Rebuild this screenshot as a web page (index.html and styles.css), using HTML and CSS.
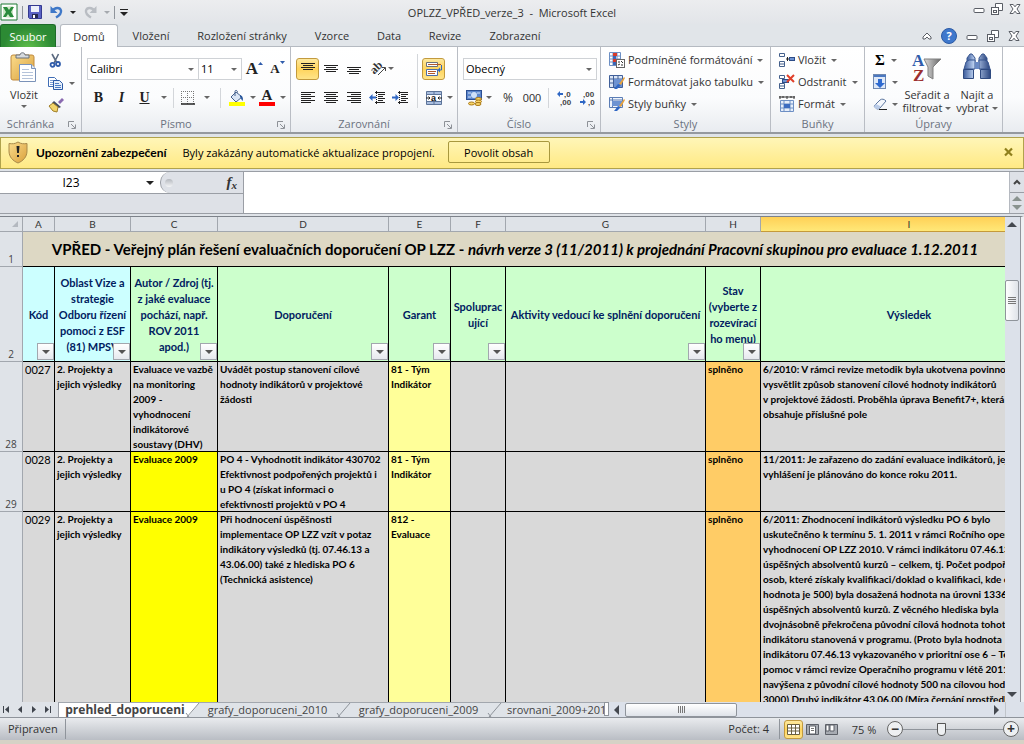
FILE: index.html
```html
<!DOCTYPE html>
<html lang="cs">
<head>
<meta charset="utf-8">
<title>OPLZZ_VPŘED_verze_3 - Microsoft Excel</title>
<link rel="stylesheet" href="styles.css">
</head>
<body>
<svg class="defs" aria-hidden="true">
  <defs>
    <linearGradient id="blue" x1="0" y1="0" x2="1" y2="1"><stop offset="0" stop-color="#a9c6ee"/><stop offset="1" stop-color="#2c55a0"/></linearGradient>
    <linearGradient id="gold" x1="0" y1="0" x2="1" y2="1"><stop offset="0" stop-color="#fbdc8c"/><stop offset="1" stop-color="#d9a03c"/></linearGradient>
    <linearGradient id="grey" x1="0" y1="0" x2="1" y2="0"><stop offset="0" stop-color="#ddd"/><stop offset="1" stop-color="#666"/></linearGradient>
    <linearGradient id="tube" x1="0" y1="0" x2="1" y2="0"><stop offset="0" stop-color="#3c5c9c"/><stop offset=".4" stop-color="#c2d6f4"/><stop offset="1" stop-color="#2b4680"/></linearGradient>
    <symbol id="min" viewBox="0 0 12 12"><rect x="1" y="5.5" width="10" height="4" rx="1" fill="#fff" stroke="#5a5e66"/></symbol>
    <symbol id="restore" viewBox="0 0 12 12"><path d="M4.500 4V.5h7v7H8" fill="#fff" stroke="#5a5e66"/><rect x=".5" y="4.500" width="7" height="7" fill="#fff" stroke="#5a5e66"/><rect x="2.500" y="7.500" width="3" height="2" fill="none" stroke="#5a5e66"/></symbol>
    <symbol id="close" viewBox="0 0 12 12"><path d="M1 1.500h3.200L6 3.800l1.800-2.300H11L8 6l3 4.500H7.800L6 8.200l-1.800 2.300H1L4 6z" fill="#fff" stroke="#5a5e66"/></symbol>
    <symbol id="launch" viewBox="0 0 8 8"><path d="M.5 6V.5H6" fill="none" stroke="#8d9197"/><path d="M3 3l4 4M7.500 3.500v4h-4" fill="none" stroke="#8d9197"/></symbol>
  </defs>
</svg>
<div class="app">
  <header class="titlebar">
    <div class="quick">
      <svg width="18" height="18" viewBox="0 0 18 18"><path d="M1 1h16v16H1z" fill="#fff" stroke="#1e7a35"/><path d="M3 4l10-1v12L3 14z" fill="#cfe8c8"/><path d="M3 4h4l2 3 2-3h3l-3 5 3 5h-4l-2-3-2 3H3l3-5z" fill="#2a8b3c"/></svg>
      <i class="vsep"></i>
      <button aria-label="Uložit"><svg width="14" height="14" viewBox="0 0 14 14"><path d="M.5.5h13v13h-12l-1-1z" fill="#5a62c4" stroke="#353a90"/><path d="M3 1h8v6H3z" fill="#eef1fa"/><path d="M4 9h6v4H4z" fill="#252a50"/><path d="M5 10h2v3H5z" fill="#fff"/></svg></button>
      <button class="undo" aria-label="Zpět"><svg width="13" height="14" viewBox="0 0 13 14"><path d="M2 6C5 2 10 2 11 5.500c.6 3-1.500 5-5 7" fill="none" stroke="#3f78c8" stroke-width="2.400"/><path d="M.5 1v7h7z" fill="#3f78c8"/></svg><i class="tri dark"></i></button>
      <button class="undo" aria-label="Znovu"><svg width="13" height="14" viewBox="0 0 13 14"><path d="M11 6C8 2 3 2 2 5.500c-.6 3 1.500 5 5 7" fill="none" stroke="#b9bdc3" stroke-width="2.400"/><path d="M12.500 1v7h-7z" fill="#b9bdc3"/></svg><i class="tri pale"></i></button>
      <i class="vsep"></i>
      <button aria-label="Přizpůsobit"><svg width="8" height="7" viewBox="0 0 8 7"><path d="M0 .5h8" stroke="#222"/><path d="M0 3h8L4 7z" fill="#222"/></svg></button>
    </div>
    <h1>OPLZZ_VPŘED_verze_3&nbsp; -&nbsp; Microsoft Excel</h1>
    <div class="winbtns">
      <button aria-label="Minimalizovat"><svg width="12" height="12"><use href="#min"/></svg></button>
      <button aria-label="Obnovit"><svg width="12" height="12"><use href="#restore"/></svg></button>
      <button aria-label="Zavřít"><svg width="12" height="12"><use href="#close"/></svg></button>
    </div>
  </header>

  <nav class="tabs">
    <button class="file">Soubor</button>
    <button class="tab active">Domů</button>
    <button class="tab t2">Vložení</button>
    <button class="tab t3">Rozložení stránky</button>
    <button class="tab t4">Vzorce</button>
    <button class="tab t5">Data</button>
    <button class="tab t6">Revize</button>
    <button class="tab t7">Zobrazení</button>
    <div class="tabright">
      <button aria-label="Sbalit pás karet"><svg width="10" height="8" viewBox="0 0 10 8"><path d="M5 1l4 4v2H7L5 5 3 7H1V5z" fill="#fff" stroke="#5a5e66"/></svg></button>
      <button class="help" aria-label="Nápověda">?</button>
      <button aria-label="Minimalizovat sešit"><svg width="12" height="12"><use href="#min"/></svg></button>
      <button aria-label="Obnovit sešit"><svg width="12" height="12"><use href="#restore"/></svg></button>
      <button aria-label="Zavřít sešit"><svg width="12" height="12"><use href="#close"/></svg></button>
    </div>
  </nav>

  <section class="ribbon">
    <div class="group g-clip">
      <div class="body">
        <button class="big paste"><svg width="28" height="32" viewBox="0 0 28 32"><rect x="1" y="3" width="23" height="25" rx="2" fill="url(#gold)" stroke="#c08a3e"/><path d="M6 6V3h4c0-3 5-3 5 0h4v3z" fill="#d6dade" stroke="#6b7078"/><path d="M9.500 12.500h12l4 4v13h-16z" fill="#fff" stroke="#7a92b8"/><path d="M21.500 12.500v4h4" fill="#dfe8f5" stroke="#7a92b8"/><path d="M12 17.500h7M12 20.500h11M12 23.500h11M12 26.500h11" stroke="#b4c3da"/></svg><span>Vložit</span><i class="tri"></i></button>
        <div class="stack clipstack">
          <button aria-label="Vyjmout"><svg width="16" height="16" viewBox="0 0 16 16"><path d="M4 1l5 9M10.500 1L6 10" stroke="#5b6a80" stroke-width="1.600"/><circle cx="4.500" cy="11.800" r="2" fill="none" stroke="#2f5cab" stroke-width="1.800"/><circle cx="10" cy="11" r="2" fill="none" stroke="#2f5cab" stroke-width="1.800"/></svg></button>
          <button aria-label="Kopírovat"><svg width="16" height="16" viewBox="0 0 16 16"><path d="M.5 2.500h6l2 2v7h-8z" fill="#fff" stroke="#3f6db5"/><path d="M2 5.500h4M2 7.500h4M2 9.500h4" stroke="#7b9dd4"/><path d="M5.500 5.500h6l3 3v6h-9z" fill="#e4eefb" stroke="#2c5aa6"/><path d="M7 8.500h4M7 10.500h6M7 12.500h6" stroke="#4d7cc4"/></svg><i class="tri"></i></button>
          <button aria-label="Kopírovat formát"><svg width="16" height="16" viewBox="0 0 16 16"><path d="M10 5l4-4 2 2-4 4z" fill="#8a6ab0"/><path d="M6 4l7 6-2 1-7-5z" fill="#444c60"/><path d="M5 6l5 4-1 5-4-1-4-5z" fill="#f3d56c" stroke="#a07f28"/></svg></button>
        </div>
      </div>
      <footer><span>Schránka</span><svg class="launch" width="8" height="8"><use href="#launch"/></svg></footer>
    </div>

    <div class="group g-font">
      <div class="body rows">
        <div class="row">
          <span class="combo fontname"><select aria-label="Písmo"><option>Calibri</option></select><i class="tri"></i></span><span class="combo fontsize"><select aria-label="Velikost písma"><option>11</option></select><i class="tri"></i></span>
          <button class="grow serif" aria-label="Zvětšit písmo">A<svg width="5" height="3" viewBox="0 0 5 3"><path d="M0 3h5L2.500 0z" fill="#2f5cab"/></svg></button>
          <button class="shrink serif" aria-label="Zmenšit písmo">A<svg width="5" height="3" viewBox="0 0 5 3"><path d="M0 0h5L2.500 3z" fill="#2f5cab"/></svg></button>
        </div>
        <div class="row">
          <button class="b serif">B</button><button class="b serif it">I</button><button class="b serif un">U</button><i class="tri ml"></i>
          <i class="rsep tight"></i>
          <button class="ib" aria-label="Ohraničení"><svg width="14" height="14" viewBox="0 0 14 14"><path d="M.5 0v13M6.500 0v13M12.500 0v13M0 .5h13M0 6.500h13" stroke="#777" stroke-dasharray="1 1"/><path d="M0 13h14" stroke="#222" stroke-width="1.500"/></svg></button><i class="tri ml"></i>
          <i class="rsep"></i>
          <button class="ib" aria-label="Barva výplně"><svg width="18" height="16" viewBox="0 0 18 16"><path d="M3 7l5-5 6 5-6 5z" fill="#dbe6f5" stroke="#44608c"/><path d="M7 6V1.500c0-2 3-1 2.500 1" fill="none" stroke="#44608c"/><path d="M12 5c3 1 3.500 4 2.500 6-1.500-1-1-3-2.500-4z" fill="#27569c"/><path d="M1 12h16v4H1z" fill="#ff0"/></svg></button><i class="tri ml2"></i>
          <button class="ib fc serif" aria-label="Barva písma">A</button><i class="tri"></i>
        </div>
      </div>
      <footer><span>Písmo</span><svg class="launch" width="8" height="8"><use href="#launch"/></svg></footer>
    </div>

    <div class="group g-align">
      <div class="body">
        <div class="rows">
          <div class="row">
            <button class="ab on" aria-label="Nahoru"><svg width="14" height="14" viewBox="0 0 14 14"><path d="M0 1.500h14M2 3.500h10M0 5.500h14M2 7.500h10" stroke="#222"/></svg></button>
            <button class="ab" aria-label="Na střed svisle"><svg width="14" height="14" viewBox="0 0 14 14"><path d="M0 3.500h14M2 5.500h10M0 7.500h14M2 9.500h10" stroke="#222"/></svg></button>
            <button class="ab" aria-label="Dolů"><svg width="14" height="14" viewBox="0 0 14 14"><path d="M0 5.500h14M2 7.500h10M0 9.500h14M2 11.500h10" stroke="#222"/></svg></button>
            <button class="ab orient" aria-label="Orientace"><svg width="16" height="16" viewBox="0 0 16 16"><text x="0" y="10" transform="rotate(-45 6 8)" font-family="Liberation Serif" font-size="12" font-weight="bold" fill="#333">ab</text><path d="M7 14l7-7M14.500 10V6.500H11" fill="none" stroke="#444"/></svg><i class="tri"></i></button>
          </div>
          <div class="row">
            <button class="ab" aria-label="Vlevo"><svg width="14" height="12" viewBox="0 0 14 12"><path d="M0 .5h14M0 2.500h10M0 4.500h14M0 6.500h10M0 8.500h14M0 10.500h10" stroke="#222"/></svg></button>
            <button class="ab" aria-label="Na střed"><svg width="14" height="12" viewBox="0 0 14 12"><path d="M0 .5h14M2 2.500h10M0 4.500h14M2 6.500h10M0 8.500h14M2 10.500h10" stroke="#222"/></svg></button>
            <button class="ab" aria-label="Vpravo"><svg width="14" height="12" viewBox="0 0 14 12"><path d="M0 .5h14M4 2.500h10M0 4.500h14M4 6.500h10M0 8.500h14M4 10.500h10" stroke="#222"/></svg></button>
            <button class="ab ind" aria-label="Zmenšit odsazení"><svg width="16" height="14" viewBox="0 0 16 14"><path d="M6 1.500h10M9 3.500h7M9 5.500h5M9 7.500h7M9 9.500h5M6 11.500h10" stroke="#222"/><path d="M7.500 0v14" stroke="#222" stroke-dasharray="1 1"/><path d="M0 6.500L3.500 3v2.500H7v2H3.500V10z" fill="#2f67c4"/></svg></button>
            <button class="ab" aria-label="Zvětšit odsazení"><svg width="16" height="14" viewBox="0 0 16 14"><path d="M6 1.500h10M9 3.500h7M9 5.500h5M9 7.500h7M9 9.500h5M6 11.500h10" stroke="#222"/><path d="M7.500 0v14" stroke="#222" stroke-dasharray="1 1"/><path d="M7 6.500L3.500 3v2.500H0v2h3.500V10z" fill="#2f67c4"/></svg></button>
          </div>
        </div>
        <i class="bsep"></i>
        <div class="rows">
          <div class="row"><button class="ab on" aria-label="Zalamovat text"><svg width="16" height="16" viewBox="0 0 16 16"><path d="M.5 1.500h11v4H.5z" fill="#fff" stroke="#6b7078"/><path d="M2 3.500h13" stroke="#b35a2a"/><path d="M.5 8.500h11v6H.5z" fill="#fff" stroke="#4c6ea8"/><path d="M2 10.500h8M2 12.500h7" stroke="#b35a2a"/><path d="M15.500 4v5H13" fill="none" stroke="#2f67c4"/><path d="M11.500 9L14 6.500v5z" fill="#2f67c4"/></svg></button></div>
          <div class="row"><button class="ab" aria-label="Sloučit"><svg width="16" height="16" viewBox="0 0 16 16"><path d="M.5 1.500h15v13H.5zM.5 4.500h15M.5 11.500h15M8 1v3M8 12v3" fill="#a9bedf" stroke="#5d7499"/><path d="M1 5h14v6H1z" fill="#fff"/><text x="5" y="10.500" font-family="Liberation Sans" font-size="9" font-weight="bold" fill="#111">a</text><path d="M0 8h4M2.500 6.500L4 8 2.500 9.500M16 8h-4M13.500 6.500L12 8l1.500 1.500" stroke="#222" fill="none"/></svg></button><i class="tri ml2"></i></div>
        </div>
      </div>
      <footer><span>Zarovnání</span><svg class="launch" width="8" height="8"><use href="#launch"/></svg></footer>
    </div>

    <div class="group g-num">
      <div class="body rows">
        <div class="row"><span class="combo numfmt"><select aria-label="Formát čísla"><option>Obecný</option></select><i class="tri"></i></span></div>
        <div class="row">
          <button class="ab" aria-label="Účetnický formát"><svg width="17" height="16" viewBox="0 0 17 16"><rect x=".5" y=".5" width="15" height="9" fill="#5c86cc" stroke="#2b4f92"/><circle cx="8" cy="5" r="3" fill="#cfe0f8"/><path d="M2 3h3M11 3h3M2 7h3" stroke="#d7e4f8"/><ellipse cx="12.500" cy="9" rx="3" ry="1.500" fill="#f7d468" stroke="#a97817"/><ellipse cx="12.500" cy="11.500" rx="3" ry="1.500" fill="#f7d468" stroke="#a97817"/><ellipse cx="12" cy="14" rx="3" ry="1.500" fill="#f7d468" stroke="#a97817"/><ellipse cx="5.500" cy="13.500" rx="3" ry="1.500" fill="#f7d468" stroke="#a97817"/></svg></button><i class="tri"></i>
          <button class="pct">%</button><button class="zeros">000</button>
          <i class="rsep"></i>
          <button class="ab dec" aria-label="Přidat desetinné místo"><svg width="16" height="16" viewBox="0 0 16 16"><path d="M0 4l3-3v2h3v2H3v2z" fill="#2f67c4"/><text x="7" y="7" font-family="Liberation Sans" font-size="8" font-weight="bold" fill="#444">,0</text><text x="3" y="15" font-family="Liberation Sans" font-size="8" font-weight="bold" fill="#444">,00</text></svg></button>
          <button class="ab" aria-label="Odebrat desetinné místo"><svg width="16" height="16" viewBox="0 0 16 16"><text x="3" y="7" font-family="Liberation Sans" font-size="8" font-weight="bold" fill="#444">,00</text><path d="M6 12L3 9v2H0v2h3v2z" fill="#2f67c4"/><text x="8" y="15" font-family="Liberation Sans" font-size="8" font-weight="bold" fill="#444">,0</text></svg></button>
        </div>
      </div>
      <footer><span>Číslo</span><svg class="launch" width="8" height="8"><use href="#launch"/></svg></footer>
    </div>

    <div class="group g-style">
      <div class="body stack">
        <button class="cmd"><svg width="16" height="16" viewBox="0 0 16 16"><path d="M.5.5h11v13H.5zM4 0v14M8 0v14M0 4h12M0 7h12M0 10h12" fill="#fff" stroke="#6d8fc4"/><path d="M4 1h4v3H4zM4 7h5v3H4z" fill="#d93a2a"/><path d="M4 4h3v3H4zM4 10h3v3H4z" fill="#3c66b4"/><rect x="7.500" y="7.500" width="8" height="8" fill="#fff" stroke="#666"/><path d="M9 10h2M12 9l2 2M9 13l2-1M12 13h2" stroke="#333"/></svg><span>Podmíněné formátování</span><i class="tri"></i></button>
        <button class="cmd"><svg width="16" height="16" viewBox="0 0 16 16"><path d="M.5 1.500h13v12H.5zM4.500 1v12M9 1v12M0 5h13M0 9h13" fill="#dbe6f6" stroke="#41609a"/><path d="M5 5h8v8H5z" fill="#6d93d2"/><path d="M15 3l-5 7 2 1 4-7z" fill="#e9a33c"/><path d="M9 10l3 1-4 4H5z" fill="#2f67c4"/></svg><span>Formátovat jako tabulku</span><i class="tri"></i></button>
        <button class="cmd"><svg width="16" height="16" viewBox="0 0 16 16"><path d="M.5 1.500h13v10H.5zM0 4h13M3.500 1v11" fill="#eef3fb" stroke="#5b7db5"/><path d="M3 5h10v5H3z" fill="#6d93d2"/><path d="M15 3l-5 7 2 1 4-7z" fill="#e9a33c"/><path d="M9 10l3 1-4 4H5z" fill="#2f67c4"/></svg><span>Styly buňky</span><i class="tri"></i></button>
      </div>
      <footer><span>Styly</span></footer>
    </div>

    <div class="group g-cells">
      <div class="body stack">
        <button class="cmd"><svg width="16" height="16" viewBox="0 0 16 16"><path d="M.5 1.500h5v3h-5zM.5 9.500h5v5h-5zM0 12h5" fill="#fff" stroke="#44608c"/><rect x="10.500" y="5.500" width="5" height="3" fill="#6d93d2" stroke="#2c4c88"/><path d="M7 7h3M8.500 5v4" stroke="#222"/></svg><span>Vložit</span><i class="tri"></i></button>
        <button class="cmd"><svg width="16" height="16" viewBox="0 0 16 16"><path d="M.5 1.500h5v3h-5zM.5 9.500h5v5h-5zM0 12h5" fill="#fff" stroke="#44608c"/><rect x="3.500" y="5.500" width="6" height="3" fill="#6d93d2" stroke="#2c4c88"/><path d="M8 1l7 7M15 1L8 8" stroke="#e0402a" stroke-width="2"/></svg><span>Odstranit</span><i class="tri"></i></button>
        <button class="cmd"><svg width="16" height="16" viewBox="0 0 16 16"><path d="M0 1h16M1 0v3M4 0v2M8 0v3M12 0v2M15 0v3" stroke="#333"/><path d="M1.500 4.500h13v11h-13zM5 4v11M11 4v11M1 8h13M1 12h13" fill="#e6eefa" stroke="#6d8fc4"/><path d="M5 8h6v4H5z" fill="#3c6cc0"/></svg><span>Formát</span><i class="tri"></i></button>
      </div>
      <footer><span>Buňky</span></footer>
    </div>

    <div class="group g-edit">
      <div class="body">
        <div class="stack editstack">
          <button><span class="sigma">Σ</span><i class="tri"></i></button>
          <button aria-label="Výplň"><svg width="14" height="16" viewBox="0 0 14 16"><rect x=".5" y=".5" width="12" height="14" fill="#dfe9f8" stroke="#7089b0"/><path d="M1 1h12v2H1z" fill="#4c78c0"/><path d="M5 5h4v4h3l-5 5-5-5h3z" fill="#2f6bd0"/></svg><i class="tri"></i></button>
          <button aria-label="Vymazat"><svg width="14" height="13" viewBox="0 0 14 13"><path d="M1 8l6-6c2-1.500 4-1 6 1L7 10c-2 2-4 1-6-2z" fill="#f4f7fc" stroke="#5d779f"/><path d="M1 8c1 3 3 4 6 2V8L3 6z" fill="#b9cbe8"/><path d="M6 11.500h8" stroke="#222"/></svg><i class="tri"></i></button>
        </div>
        <button class="big sort"><svg width="30" height="32" viewBox="0 0 30 32"><path d="M12 7h17l-8 8v12l-5-3v-9z" fill="url(#grey)" stroke="#808080"/><text x="0" y="14" font-family="Liberation Serif" font-size="17" font-weight="bold" fill="#2f5cab">A</text><text x="1" y="29" font-family="Liberation Serif" font-size="17" font-weight="bold" fill="#9c3030">Z</text></svg><span>Seřadit a<br>filtrovat<i class="tri"></i></span></button>
        <button class="big find"><svg width="30" height="32" viewBox="0 0 30 32"><path d="M5 8V6l3-4h2l3 4v4H5zM25 8V6l-3-4h-2l-3 4v4h8z" fill="url(#tube)" stroke="#39568f"/><path d="M2 17l2-7 3-2h6v9zM28 17l-2-7-3-2h-6v9z" fill="url(#tube)" stroke="#39568f"/><path d="M1.500 17.500h10v9h-10zM18.500 17.500h10v9h-10z" fill="url(#tube)" stroke="#2f4a80"/><path d="M13 10h4v7h-4z" fill="#6a8ac4"/></svg><span>Najít a<br>vybrat<i class="tri"></i></span></button>
      </div>
      <footer><span>Úpravy</span></footer>
    </div>
  </section>

  <section class="warning">
    <svg width="20" height="23" viewBox="0 0 20 23"><path d="M10 1c3 2 6 2 9 1.500V10c0 6-4 10-9 12C5 20 1 16 1 10V2.500C4 3 7 3 10 1z" fill="url(#gold)" stroke="#a98a4a"/><path d="M8.500 5h3l-.6 7H9.100zM9 14h2v2H9z" fill="#222"/></svg>
    <strong>Upozornění zabezpečení</strong>
    <span>Byly zakázány automatické aktualizace propojení.</span>
    <button class="enable">Povolit obsah</button>
    <button class="wclose" aria-label="Zavřít"><svg width="9" height="8" viewBox="0 0 9 8"><path d="M1 0.500l7 7M8 .5l-7 7" stroke="#8f7f1c" stroke-width="2.200"/></svg></button>
  </section>

  <section class="formula">
    <div class="fleft">
      <div class="fname"><input class="namebox" aria-label="Pole názvů" value="I23"><i class="tri dark"></i><div class="fx"><i class="knob"></i><button class="fxb">f<small>x</small></button></div></div>
    </div>
    <textarea aria-label="Řádek vzorců"></textarea>
    <div class="fscroll">
      <button aria-label="Rozbalit"><svg width="8" height="5" viewBox="0 0 8 5"><path d="M1 4l3-3 3 3" fill="none" stroke="#444" stroke-width="2"/></svg></button>
      <div class="spin"><i class="up"></i><i class="down"></i></div>
    </div>
  </section>

  <main class="sheet">
    <div class="clip">
      <table>
        <colgroup><col class="c0"><col class="ca"><col class="cb"><col class="cc"><col class="cd"><col class="ce"><col class="cf"><col class="cg"><col class="ch"><col class="ci"></colgroup>
        <thead>
          <tr class="letters"><th class="corner"><svg width="6" height="6" viewBox="0 0 6 6"><path d="M6 0v6H0z" fill="#b4b9c0"/></svg></th><th>A</th><th>B</th><th>C</th><th>D</th><th>E</th><th>F</th><th>G</th><th>H</th><th class="sel">I</th></tr>
        </thead>
        <tbody>
          <tr class="title"><th class="n">1</th><td colspan="9">VPŘED - Veřejný plán řešení evaluačních doporučení OP LZZ - <em>návrh verze 3 (11/2011) k projednání Pracovní skupinou pro evaluace 1.12.2011</em></td></tr>
          <tr class="heads"><th class="n">2</th>
            <td class="cyan"><div>Kód<button class="filter" aria-label="Filtr"></button></div></td>
            <td class="cyan"><div>Oblast Vize a<br>strategie<br>Odboru řízení<br>pomoci z ESF<br>(81) MPSV<button class="filter" aria-label="Filtr"></button></div></td>
            <td><div>Autor / Zdroj (tj.<br>z jaké evaluace<br>pochází, např.<br>ROV 2011<br>apod.)<button class="filter" aria-label="Filtr"></button></div></td>
            <td><div>Doporučení<button class="filter" aria-label="Filtr"></button></div></td>
            <td><div>Garant<button class="filter" aria-label="Filtr"></button></div></td>
            <td><div>Spoluprac<br>ující<button class="filter" aria-label="Filtr"></button></div></td>
            <td><div>Aktivity vedoucí ke splnění doporučení<button class="filter" aria-label="Filtr"></button></div></td>
            <td><div>Stav<br>(vyberte z<br>rozevírací<br>ho menu)<button class="filter" aria-label="Filtr"></button></div></td>
            <td><div>Výsledek</div></td></tr>
          <tr class="r28"><th class="n">28</th><td class="code">0027</td><td>2. Projekty a<br>jejich výsledky</td><td>Evaluace ve vazbě<br>na monitoring<br>2009 -<br>vyhodnocení<br>indikátorové<br>soustavy (DHV)</td><td>Uvádět postup stanovení cílové<br>hodnoty indikátorů v projektové<br>žádosti</td><td class="ly">81 - Tým<br>Indikátor</td><td></td><td></td><td class="or">splněno</td><td>6/2010: V rámci revize metodik byla ukotvena povinnost<br>vysvětlit způsob stanovení cílové hodnoty indikátorů<br>v projektové žádosti. Proběhla úprava Benefit7+, která<br>obsahuje příslušné pole</td></tr>
          <tr class="r29"><th class="n">29</th><td class="code">0028</td><td>2. Projekty a<br>jejich výsledky</td><td class="ye">Evaluace 2009</td><td>PO 4 - Vyhodnotit indikátor 430702<br>Efektivnost podpořených projektů i<br>u PO 4 (získat informaci o<br>efektivnosti projektů v PO 4</td><td class="ly">81 - Tým<br>Indikátor</td><td></td><td></td><td class="or">splněno</td><td>11/2011: Je zařazeno do zadání evaluace indikátorů, jejíž<br>vyhlášení je plánováno do konce roku 2011.</td></tr>
          <tr class="r30"><th class="n"></th><td class="code">0029</td><td>2. Projekty a<br>jejich výsledky</td><td class="ye">Evaluace 2009</td><td>Při hodnocení úspěšnosti<br>implementace OP LZZ vzít v potaz<br>indikátory výsledků (tj. 07.46.13 a<br>43.06.00) také z hlediska PO 6<br>(Technická asistence)</td><td class="ly">812 -<br>Evaluace</td><td></td><td></td><td class="or">splněno</td><td>6/2011: Zhodnocení indikátorů výsledku PO 6 bylo<br>uskutečněno k termínu 5. 1. 2011 v rámci Ročního operativního<br>vyhodnocení OP LZZ 2010. V rámci indikátoru 07.46.13 (Počet<br>úspěšných absolventů kurzů – celkem, tj. Počet podpořených<br>osob, které získaly kvalifikaci/doklad o kvalifikaci, kde cílová<br>hodnota je 500) byla dosažená hodnota na úrovni 1336<br>úspěšných absolventů kurzů. Z věcného hlediska byla<br>dvojnásobně překročena původní cílová hodnota tohoto<br>indikátoru stanovená v programu. (Proto byla hodnota<br>indikátoru 07.46.13 vykazovaného v prioritní ose 6 – Technická<br>pomoc v rámci revize Operačního programu v létě 2011<br>navýšena z původní cílové hodnoty 500 na cílovou hodnotu<br>3000) Druhý indikátor 43.06.00 (Míra čerpání prostředků</td></tr>
        </tbody>
      </table>
    </div>
    <div class="vscroll"><i class="up dk"></i><div class="vthumb"><i></i><i></i><i></i><i></i></div><i class="down dk"></i></div>
  </main>

  <div class="sheetbar">
    <div class="navs">
      <button aria-label="První list"><svg width="7" height="7" viewBox="0 0 7 7"><path d="M.5 0v7" stroke="#3f444c"/><path d="M6 0v7L2 3.500z" fill="#3f444c"/></svg></button>
      <button aria-label="Předchozí list"><svg width="7" height="7" viewBox="0 0 7 7"><path d="M5 0v7L1 3.500z" fill="#3f444c"/></svg></button>
      <button aria-label="Další list"><svg width="7" height="7" viewBox="0 0 7 7"><path d="M2 0v7l4-3.500z" fill="#3f444c"/></svg></button>
      <button aria-label="Poslední list"><svg width="7" height="7" viewBox="0 0 7 7"><path d="M6.500 0v7" stroke="#3f444c"/><path d="M1 0v7l4-3.500z" fill="#3f444c"/></svg></button>
    </div>
    <div class="stabs">
      <button class="stab cur">prehled_doporuceni</button><svg class="slant first" width="14" height="14" viewBox="0 0 14 14"><path d="M0 0h14L3 14H0z" fill="#fff"/><path d="M14 0L2 14M1 10l3 4" fill="none" stroke="#8d9299"/></svg>
      <button class="stab s2">grafy_doporuceni_2010</button><svg class="slant" width="14" height="14" viewBox="0 0 14 14"><path d="M14 0L2 14M1 10l3 4" fill="none" stroke="#8d9299"/></svg>
      <button class="stab s3">grafy_doporuceni_2009</button><svg class="slant" width="14" height="14" viewBox="0 0 14 14"><path d="M14 0L2 14M1 10l3 4" fill="none" stroke="#8d9299"/></svg>
      <button class="stab s4">srovnani_2009+2010</button>
    </div>
    <i class="split"></i>
    <div class="hscroll"><i class="left"></i><div class="hthumb"><i></i><i></i><i></i><i></i></div><i class="right"></i></div>
    <i class="sizer"></i>
  </div>

  <footer class="status">
    <span class="ready">Připraven</span>
    <span class="count">Počet: 4</span>
    <div class="views">
      <button class="v on" aria-label="Normálně"><svg width="13" height="11" viewBox="0 0 13 11"><path d="M.5.5h12v10H.5zM4.500 0v11M8.500 0v11M0 4h13M0 7h13" fill="#fff" stroke="#6a6040"/></svg></button>
      <button class="v" aria-label="Rozložení stránky"><svg width="13" height="11" viewBox="0 0 13 11"><path d="M.5.5h12v10H.5z" fill="#a7abb2" stroke="#5c6068"/><path d="M3.500 2h6v8h-6z" fill="#fff" stroke="#5c6068"/><path d="M5 4.500h3M5 6.500h3" stroke="#777"/></svg></button>
      <button class="v" aria-label="Konce stránek"><svg width="13" height="11" viewBox="0 0 13 11"><path d="M.5.5h12v10H.5z" fill="#a7abb2" stroke="#5c6068"/><path d="M1 1h3v6H1zM5 1h4v6H5z" fill="#fff" stroke="#5c6068"/></svg></button>
    </div>
    <span class="zoomtxt">75 %</span>
    <button class="round" aria-label="Oddálit">−</button>
    <input class="zoom" type="range" min="0" max="100" value="37" aria-label="Lupa">
    <button class="round" aria-label="Přiblížit">+</button>
  </footer>
</div>
</body>
</html>
```
FILE: styles.css
```css
* { box-sizing: border-box; }
html, body { margin: 0; height: 100%; }
body { font-family: "Open Sans", "Noto Sans", sans-serif; font-size: 11px; color: #333; }
button, input, select, textarea { font: inherit; color: inherit; margin: 0; padding: 0; border: 0; background: none; }
button { display: flex; align-items: center; justify-content: center; white-space: nowrap; }
svg { display: block; flex: none; overflow: visible; }
i { font-style: normal; flex: none; }
.defs { position: absolute; width: 0; height: 0; }
.app { height: 100vh; display: flex; flex-direction: column; overflow: hidden; background: #dfe3e8; border-bottom: 4px solid #d6d2c6; }

.tri { display: inline-block; width: 0; height: 0; border: 3px solid transparent; border-top-color: #666; border-bottom-width: 0; }
.tri.dark { border-top-color: #222; }
.tri.pale { border-top-color: #a5a9ae; }
.ml { margin: 0 5px; }
.ml2 { margin: 0 3px 0 2px; }

/* title bar */
.titlebar { height: 24px; flex: none; display: grid; grid-template-columns: 1fr auto 1fr; align-items: center; background: linear-gradient(#ecedef, #e2e5e9); }
.quick { display: flex; align-items: center; gap: 7px; }
.quick .vsep { width: 1px; height: 13px; background: #8f949b; margin: 0 -3px; }
.quick > button { margin-left: 1px; }
.undo { gap: 7px; }
h1 { margin: 0; font-size: 11px; font-weight: 400; }
.winbtns { display: flex; gap: 6px; justify-content: flex-end; align-items: flex-start; height: 18px; padding-right: 3px; }

/* ribbon tabs */
.tabs { height: 23px; flex: none; display: flex; align-items: stretch; background: #e1e5e9; box-shadow: inset 0 -1px #b5bac1; font-size: 11px; }
.file { width: 56px; color: #fff; background: radial-gradient(ellipse at 50% 110%, #62c04b, #2c8a34 65%); border: 1px solid #1d6b29; border-bottom: 0; border-radius: 3px 3px 0 0; }
.tab.active { width: 58px; margin-left: 4px; background: #fff; border: 1px solid #b5bac1; border-bottom: 0; border-radius: 3px 3px 0 0; }
.t2 { width: 66px; }
.t3 { width: 116px; }
.t4 { width: 64px; }
.t5 { width: 50px; }
.t6 { width: 62px; }
.t7 { width: 78px; }
.tabright { margin-left: auto; display: flex; align-items: center; gap: 9px; padding-right: 4px; }
.help { width: 16px; height: 16px; border-radius: 50%; background: #3f78cc; border: 1px solid #2c5aa4; color: #fff; font-weight: 700; font-size: 11px; }

/* ribbon */
.ribbon { height: 87px; flex: none; display: flex; background: linear-gradient(#fff, #fbfcfd 60%, #e9ecf0); border-bottom: 2px solid #95999f; }
.group { flex: none; display: flex; flex-direction: column; border-right: 1px solid #b9bdc4; }
.group .body { flex: 1; display: flex; }
.group footer { position: relative; height: 16px; padding-right: 20px; text-align: center; color: #6b7280; line-height: 16px; }
.g-style footer, .g-cells footer, .g-edit footer { padding-right: 0; }
.launch { position: absolute; right: 5px; top: 5px; }
.g-clip { width: 82px; }
.g-font { width: 209px; }
.g-align { width: 167px; }
.g-num { width: 143px; }
.g-style { width: 170px; }
.g-cells { width: 94px; }
.g-edit { width: 138px; }
.stack { display: flex; flex-direction: column; padding-top: 3px; }
.stack button { height: 22px; justify-content: flex-start; gap: 5px; line-height: 14px; }
.group .body.stack { flex-direction: column; padding: 2px 0 0 8px; }
.cmd span { margin-left: -2px; }
.rows { display: flex; flex-direction: column; gap: 6px; padding-top: 10px; }
.group .body.rows { flex-direction: column; padding-left: 5px; }
.row { display: flex; align-items: center; height: 23px; }
.big { flex-direction: column; justify-content: flex-start; line-height: 13px; padding-top: 5px; }
.paste { width: 48px; gap: 4px; }
.big span .tri { vertical-align: 2px; margin-left: 3px; }
.combo { position: relative; display: flex; height: 22px; border: 1px solid #cfd2d6; background: #fff; }
.combo select { appearance: none; width: 100%; padding-left: 2px; color: #000; }
.combo .tri { position: absolute; right: 4px; top: 9px; pointer-events: none; }
.fontname { width: 112px; }
.fontsize { width: 43px; border-left: 0; }
.serif { font-family: "Liberation Serif", serif; font-weight: 700; color: #222; }
.grow { width: 23px; font-size: 17px; margin-left: 1px; }
.shrink { width: 23px; font-size: 13px; }
.grow svg, .shrink svg { align-self: flex-start; margin-top: 3px; }
.shrink svg { margin-top: 0; }
.b { width: 23px; font-size: 14px; }
.it { font-style: italic; }
.un { text-decoration: underline; }
.rsep { width: 1px; height: 20px; background: #d3d6da; margin: 0 5px; }
.rsep.tight { margin: 0 3px 0 1px; }
.ib { width: 22px; height: 20px; }
.fc { font-size: 15px; line-height: 13px; height: 16px; width: 16px; border-bottom: 4px solid #f00; margin-right: 5px; }
.g-align .body { padding-left: 5px; }
.ab { width: 23px; height: 22px; }
.on { border: 1px solid #c29a3e; border-radius: 3px; background: linear-gradient(#fde9a0, #ffd45c 50%, #ffe488); }
.orient { width: 30px; gap: 1px; margin-left: 2px; }
.bsep { width: 1px; height: 54px; margin: 7px 4px 0 6px; background: #d3d6da; }
.numfmt { width: 134px; }
.pct { width: 24px; margin-left: 4px; font-size: 12px; }
.zeros { width: 24px; font-size: 11px; font-family: "Liberation Sans", sans-serif; }
.g-num .rsep { margin: 0 4px; }
.editstack { width: 37px; padding: 2px 5px 0 8px; }
.editstack .tri { margin-left: auto; }
.sigma { font-family: "Liberation Serif", serif; font-weight: 700; font-size: 15px; color: #000; width: 14px; padding-left: 1px; }
.g-edit .big { width: 50px; gap: 4px; }

/* security warning */
.warning { height: 32px; margin-top: 3px; flex: none; display: flex; align-items: center; padding: 0 0 2px 7px; color: #000; font-size: 11px; border: 1px solid #b0a24c; background: linear-gradient(#fff6b8, #ffe984); }
.warning strong { margin: 0 16px 0 8px; font-family: Lato, "Noto Sans", sans-serif; font-size: 12px; }
.enable { width: 102px; height: 22px; margin-left: 13px; border: 1px solid #a8983e; border-radius: 2px; }
.wclose { margin-left: auto; padding-right: 10px; }

/* formula bar */
.formula { height: 43px; margin-top: 2px; flex: none; display: flex; border-top: 1px solid #9a9ea5; border-bottom: 1px solid #9a9ea5; background: #dee1e7; }
.fleft { width: 244px; border-right: 1px solid #9a9ea5; }
.fname { height: 22px; display: flex; align-items: center; border-bottom: 1px solid #9a9ea5; background: #fff; }
.namebox { width: 142px; text-align: center; font-size: 12px; color: #000; }
.fname .tri { border-width: 4px 4px 0; margin: 0 4px; }
.fx { flex: 1; margin-left: 2px; height: 21px; display: flex; align-items: center; justify-content: space-between; padding: 0 6px 0 4px; background: #dee1e7; border-left: 1px solid #9a9ea5; border-radius: 10px 0 0 10px; }
.knob { width: 8px; height: 8px; border-radius: 50%; background: linear-gradient(#b4b8be, #f4f5f7); }
.fxb { font: italic 700 15px "Liberation Serif", serif; }
.fxb small { font-size: 11px; align-self: flex-end; }
.formula textarea { flex: 1; resize: none; background: #fff; }
.fscroll { width: 15px; display: flex; flex-direction: column; border-left: 1px solid #b5b9c0; }
.fscroll button { height: 21px; border-bottom: 1px solid #9a9ea5; }
.spin { flex: 1; display: flex; flex-direction: column; align-items: center; justify-content: space-evenly; }
.up, .down { width: 0; height: 0; border: 5px solid transparent; }
.up { border-top: 0; border-bottom-color: #8a938f; }
.down { border-bottom: 0; border-top-color: #8a938f; }
.up.dk { border-bottom-color: #44484f; }
.down.dk { border-top-color: #44484f; }

/* sheet */
.sheet { flex: 1; min-height: 0; display: flex; margin-top: 2px; border-top: 1px solid #7d828a; background: #dce1ea; border-right: 3px solid #eef0f3; }
.clip { flex: 1; overflow: hidden; }
table { table-layout: fixed; width: 1058px; border-collapse: separate; border-spacing: 0; font-family: Lato, "Noto Sans", sans-serif; }
.c0 { width: 23px; } .ca { width: 32px; } .cb { width: 76px; } .cc { width: 87px; } .cd { width: 171px; }
.ce { width: 62px; } .cf { width: 55px; } .cg { width: 200px; } .ch { width: 55px; } .ci { width: 297px; }
th, td { padding: 0; overflow: hidden; white-space: nowrap; }
.letters th { height: 15px; font-weight: 400; font-size: 10px; line-height: 13px; color: #333; background: #dfe3e8; border-right: 1px solid #a2a7ae; border-bottom: 1px solid #a2a7ae; }
.letters .sel { background: linear-gradient(#ffd056, #ffe878); border-bottom-color: #c49a3a; }
.corner svg { margin-left: 12px; }
.sheet .n { font: 400 10px/12px "Open Sans", sans-serif; color: #444; vertical-align: bottom; background: #dfe3e8; border-right: 1px solid #a2a7ae; border-bottom: 1px solid #a2a7ae; padding-bottom: 1px; }
td { background: #d9d9d9; color: #000; font-weight: 700; font-size: 10px; line-height: 15px; vertical-align: top; padding-left: 2px; border-right: 1px solid #000; box-shadow: inset 0 -1px #000; }
.title td { height: 35px; padding: 0 50px 0 0; background: #ddd8c4; text-align: center; vertical-align: middle; font-size: 15px; }
.heads td { height: 95px; padding: 0; background: #cfc; color: #002060; font-size: 11px; line-height: 16px; text-align: center; }
.heads td.cyan { background: #cff; }
.heads td > div { position: relative; height: 95px; display: grid; place-content: center; }
.filter { position: absolute; right: 0; bottom: 2px; width: 17px; height: 17px; border: 1px solid #a2a7ae; background: linear-gradient(#fff, #e6e9ee); }
.filter::after { content: ""; border: 4px solid transparent; border-top-color: #555; border-bottom: 0; }
.r28 td { height: 90px; }
.r29 td { height: 60px; }
.r30 td { height: 200px; }
td.code { font-weight: 400; font-size: 11px; }
td.ly { background: #ff9; }
td.ye { background: #ff0; }
td.or { background: #fc6; }
.vscroll { width: 16px; display: flex; flex-direction: column; align-items: center; padding: 5px 1px 5px 0; border-right: 1px solid #8f949b; }
.vthumb { width: 14px; height: 41px; margin: 53px 0 auto; display: flex; flex-direction: column; align-items: center; justify-content: center; gap: 1px; border: 1px solid #8f949b; border-radius: 2px; background: linear-gradient(90deg, #fff, #dfe3e9); }
.vthumb i { width: 8px; height: 1px; background: #777; }

/* sheet tabs */
.sheetbar { height: 16px; flex: none; display: flex; background: #dfe3e8; border-bottom: 1px solid #8f949b; }
.navs { width: 59px; display: flex; align-items: center; justify-content: space-around; padding: 0 4px 0 0; border-right: 1px solid #9a9ea5; }
.stabs { flex: none; width: 545px; display: flex; overflow: hidden; border-top: 1px solid #a2a7ae; }
.stab { flex: none; color: #444; line-height: 14px; }
.stab.cur { width: 126px; padding-left: 6px; background: #fff; font-weight: 700; font-size: 12px; }
.s2, .s3 { width: 137px; }
.s4 { padding-left: 6px; }
.split { width: 5px; height: 14px; border: 1px solid #8f949b; background: #fff; }
.hscroll { flex: 1; display: flex; align-items: center; padding: 0 6px 0 5px; background: #dce1ea; }
.left, .right { width: 0; height: 0; border: 5px solid transparent; }
.left { border-left: 0; border-right-color: #44484f; }
.right { border-right: 0; border-left-color: #44484f; margin-left: auto; }
.hthumb { width: 112px; height: 14px; margin-left: 6px; display: flex; align-items: center; justify-content: center; gap: 1px; border: 1px solid #8f949b; border-radius: 2px; background: linear-gradient(#fff, #dfe3e9); }
.hthumb i { width: 1px; height: 7px; background: #777; }
.sizer { width: 19px; border-left: 1px solid #c0c4ca; background: #dce1ea; }

/* status bar */
.status { height: 22px; flex: none; display: flex; align-items: center; padding: 0 5px 0 8px; background: linear-gradient(#e9ebee, #b9bdc4); font-size: 11px; }
.ready { width: 58px; line-height: 20px; border-right: 1px solid #8f949b; }
.count { margin-left: auto; padding-right: 10px; line-height: 20px; border-right: 1px solid #8f949b; }
.views { display: flex; align-items: center; padding-left: 4px; }
.v { width: 19px; height: 19px; }
.zoomtxt { width: 46px; text-align: center; }
.round { width: 16px; height: 16px; border: 1px solid #666; border-radius: 50%; background: #eef0f2; font-size: 14px; font-weight: 700; line-height: 12px; }
.zoom { appearance: none; width: 100px; height: 16px; margin: 0; background: linear-gradient(#8f949b, #8f949b) center / 100% 1px no-repeat; }
.zoom::-webkit-slider-thumb { appearance: none; width: 9px; height: 13px; border: 1px solid #555; border-radius: 1px 1px 5px 5px; background: #eef0f2; }
```
